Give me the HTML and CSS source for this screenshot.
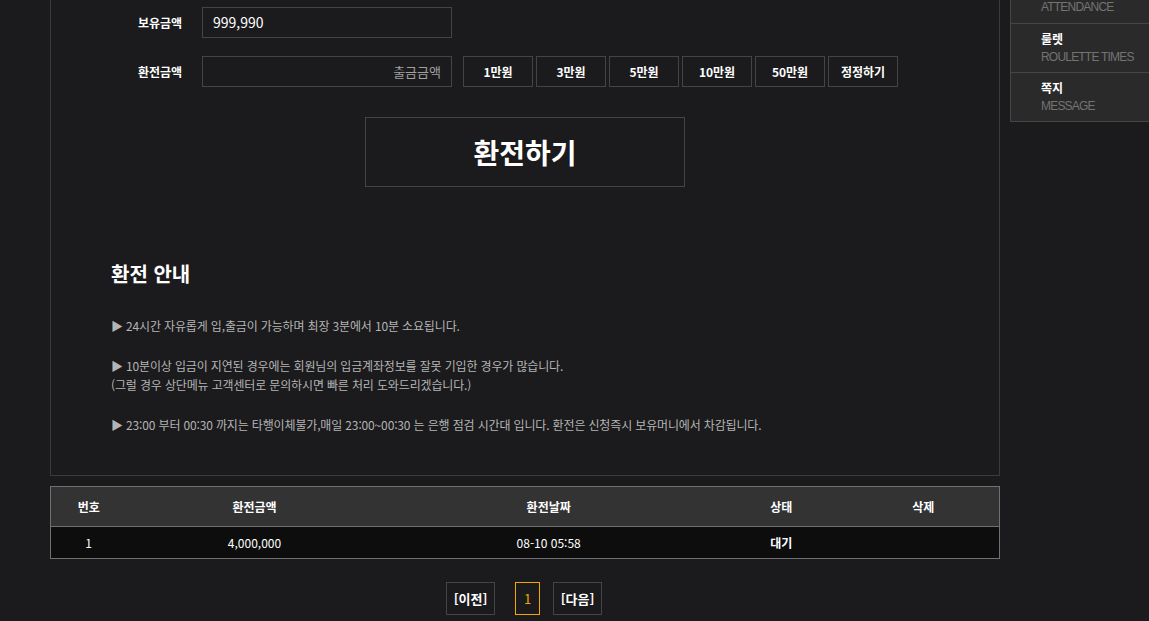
FILE: index.html
```html
<!DOCTYPE html>
<html lang="ko">
<head>
	<meta charset="UTF-8">
	<title>환전하기</title>
	<link rel="stylesheet" href="styles.css">
</head>
<body>
<div class="container">
	<div class="panel">
		<div class="form-row">
			<span class="label">보유금액</span>
			<div class="input">999,990</div>
		</div>
		<div class="form-row">
			<span class="label">환전금액</span>
			<div class="input placeholder">출금금액</div>
			<div class="amounts">
				<button>1만원</button>
				<button>3만원</button>
				<button>5만원</button>
				<button>10만원</button>
				<button>50만원</button>
				<button>정정하기</button>
			</div>
		</div>
		<div class="submit-wrap">
			<button class="submit">환전하기</button>
		</div>
		<div class="guide">
			<h3>환전 안내</h3>
			<p>▶ 24시간 자유롭게 입,출금이 가능하며 최장 3분에서 10분 소요됩니다.</p>
			<p>▶ 10분이상 입금이 지연된 경우에는 회원님의 입금계좌정보를 잘못 기입한 경우가 많습니다.<br>(그럴 경우 상단메뉴 고객센터로 문의하시면 빠른 처리 도와드리겠습니다.)</p>
			<p>▶ 23:00 부터 00:30 까지는 타행이체불가,매일 23:00~00:30 는 은행 점검 시간대 입니다. 환전은 신청즉시 보유머니에서 차감됩니다.</p>
		</div>
	</div>

	<table class="history">
		<thead>
		<tr>
			<th class="c1">번호</th>
			<th class="c2">환전금액</th>
			<th class="c3">환전날짜</th>
			<th class="c4">상태</th>
			<th class="c5">삭제</th>
		</tr>
		</thead>
		<tbody>
		<tr>
			<td>1</td>
			<td>4,000,000</td>
			<td>08-10 05:58</td>
			<td class="status">대기</td>
			<td></td>
		</tr>
		</tbody>
	</table>

	<div class="pager">
		<a class="prev">[이전]</a>
		<a class="current">1</a>
		<a class="next">[다음]</a>
	</div>
</div>

<ul class="quick">
	<li><b></b><span>ATTENDANCE</span></li>
	<li><b>룰렛</b><span>ROULETTE TIMES</span></li>
	<li><b>쪽지</b><span>MESSAGE</span></li>
</ul>
</body>
</html>
```

FILE: styles.css
```css
body {
	margin: 0;
	background: #1b1b1d;
	color: #fff;
	font-family: "Noto Sans CJK KR", "Noto Sans", sans-serif;
	font-size: 12px;
}

.container {
	width: 950px;
	margin-left: 50px;
}

.panel {
	border: 1px solid #3b3b3d;
	border-top: none;
	padding-top: 7px;
	height: 468px;
}

.form-row {
	display: flex;
	align-items: center;
	padding-left: 87px;
	margin-bottom: 18px;
}

.label {
	width: 64px;
	font-weight: bold;
	font-size: 12px;
}

.input {
	box-sizing: border-box;
	width: 250px;
	height: 31px;
	border: 1px solid #444446;
	padding: 0 10px;
	font-size: 14px;
	line-height: 29px;
}

.input.placeholder {
	text-align: right;
	color: #a0a0a0;
	font-size: 13px;
}

.amounts {
	display: flex;
	gap: 3px;
	margin-left: 11px;
}

.amounts button {
	width: 70px;
	height: 31px;
	background: transparent;
	border: 1px solid #444446;
	color: #fff;
	font-family: inherit;
	font-weight: bold;
	font-size: 12px;
	padding: 0;
}

.submit-wrap {
	display: flex;
	justify-content: center;
	margin-top: 30px;
}

.submit {
	width: 320px;
	height: 70px;
	background: transparent;
	border: 1px solid #444446;
	color: #fff;
	font-family: inherit;
	font-size: 28px;
	font-weight: bold;
	padding: 0;
}

.guide {
	padding: 0 0 0 60px;
	margin-top: 73px;
}

.guide h3 {
	margin: 0 0 28px;
	font-size: 20px;
	line-height: 28px;
}

.guide p {
	margin: 0 0 21px;
	color: #b4b4b4;
	font-size: 12px;
	line-height: 19px;
	letter-spacing: -0.15px;
}

.history {
	width: 950px;
	margin-top: 10px;
	border-collapse: collapse;
	border: 1px solid #707070;
	text-align: center;
}

.history th {
	background: #333;
	height: 39px;
	font-size: 12px;
	font-weight: bold;
	border-bottom: 1px solid #707070;
	padding: 0;
}

.history td {
	background: #0d0d0d;
	height: 31px;
	font-size: 12px;
	padding: 0;
}

.history .status {
	font-weight: bold;
}

.c1 { width: 8%; }
.c2 { width: 27%; }
.c3 { width: 35%; }
.c4 { width: 14%; }
.c5 { width: 16%; }

.pager {
	display: flex;
	justify-content: center;
	margin-top: 23px;
	padding-right: 2px;
}

.pager a {
	box-sizing: border-box;
	width: 49px;
	height: 33px;
	line-height: 31px;
	border: 1px solid #444446;
	text-align: center;
	font-size: 13px;
	font-weight: bold;
	color: #fff;
}

.pager .current {
	border-color: #f5a500;
	color: #f5a500;
	width: 25px;
	font-weight: normal;
	margin: 0 13px 0 20px;
}

.quick {
	position: fixed;
	top: -27px;
	right: 0;
	width: 138px;
	margin: 0;
	padding: 0;
	list-style: none;
	background: #2a2a2b;
	border: 1px solid #454545;
	border-right: none;
}

.quick li {
	height: 49px;
	padding: 5px 0 0 30px;
	box-sizing: border-box;
	border-top: 1px solid #454545;
	display: flex;
	flex-direction: column;
}

.quick li:first-child {
	border-top: none;
	height: 49px;
}

.quick b {
	font-size: 12px;
	height: 19px;
	line-height: 19px;
}

.quick span {
	font-family: "Liberation Sans", Arial, sans-serif;
	color: #737373;
	font-size: 12px;
	letter-spacing: -0.8px;
	line-height: 18px;
}
```
